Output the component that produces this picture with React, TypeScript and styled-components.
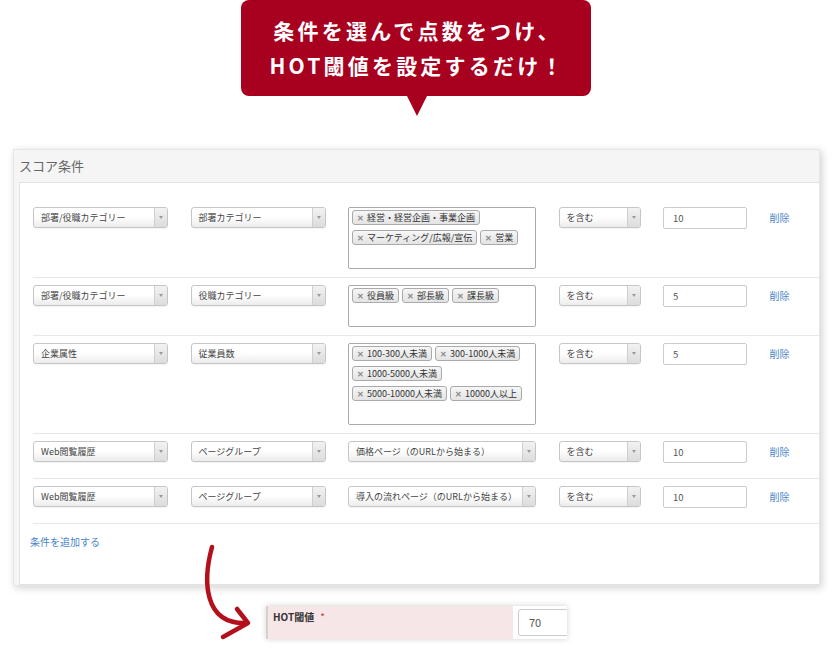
import React from 'react';
import styled, { createGlobalStyle } from 'styled-components';

const GlobalStyle = createGlobalStyle`
  body {
    margin: 0;
    background: #fff;
    font-family: "Noto Sans CJK JP", "Noto Sans", sans-serif;
  }
`;

const Page = styled.div`
  position: relative;
  width: 838px;
  height: 657px;
  overflow: hidden;
`;

const Callout = styled.div`
  position: relative;
  margin-left: 241px;
  width: 350px;
  box-sizing: border-box;
  padding: 13px 0 13px 3px;
  background: #a8001f;
  border-radius: 8px;
  color: #fff;
  text-align: center;
  font-size: 21px;
  font-weight: 700;
  line-height: 35px;
  letter-spacing: 3.2px;

  &::after {
    content: '';
    position: absolute;
    left: 166px;
    top: 96px;
    border-left: 10.5px solid transparent;
    border-right: 10.5px solid transparent;
    border-top: 20px solid #a8001f;
  }
`;

const Panel = styled.section`
  margin: 53px 0 0 13px;
  width: 807px;
  box-sizing: border-box;
  background: #f5f5f5;
  border: 1px solid #e6e6e6;
  box-shadow: 2px 2px 8px rgba(0, 0, 0, 0.18);
  padding-left: 5px;
`;

const PanelTitle = styled.h2`
  margin: 0;
  height: 32px;
  line-height: 32px;
  font-size: 13px;
  font-weight: 400;
  color: #666;
`;

const PanelBody = styled.div`
  background: #fff;
  border: 1px solid #e2e2e2;
  border-right: none;
  padding: 17px 0 35px 13px;
`;

const Row = styled.div`
  display: grid;
  grid-template-columns: 135px 135px 188px 82px 84px auto;
  grid-auto-rows: minmax(29px, auto);
  column-gap: 22.5px;
  align-items: start;
  padding: 7px 0 8px;
  border-bottom: 1px solid #e8e8e8;
`;

const Select = styled.div`
  display: flex;
  height: 21px;
  box-sizing: border-box;
  border: 1px solid #c6c6c6;
  border-radius: 3px;
  background: linear-gradient(#fff 45%, #ececec);
  box-shadow: 0 1px 1px rgba(0, 0, 0, 0.05);
  font-size: 9px;
  color: #444;
  overflow: hidden;
`;

const SelectText = styled.span`
  flex: 1;
  padding-left: 7px;
  line-height: 19px;
  white-space: nowrap;
`;

const SelectArrow = styled.span`
  width: 12px;
  display: flex;
  align-items: center;
  justify-content: center;
  border-left: 1px solid #cfcfcf;
  background: linear-gradient(#f2f2f2, #dcdcdc);

  &::before {
    content: '';
    border-left: 2.5px solid transparent;
    border-right: 2.5px solid transparent;
    border-top: 3px solid #9a9a9a;
  }
`;

const MultiBox = styled.div`
  display: flex;
  flex-wrap: wrap;
  align-content: flex-start;
  box-sizing: border-box;
  border: 1px solid #aaa;
  border-radius: 2px;
  padding: 0 3px 20px 0;
`;

const Tag = styled.span`
  display: inline-flex;
  align-items: center;
  height: 15px;
  box-sizing: border-box;
  margin: 2px 0 3px 3px;
  padding: 0 4px 0 4px;
  border: 1px solid #aaa;
  border-radius: 3px;
  background: linear-gradient(#f6f6f6, #e4e4e4);
  font-size: 9px;
  line-height: 13px;
  color: #333;
  white-space: nowrap;
`;

const TagRemove = styled.span`
  width: 10px;
  font-size: 8px;
  font-weight: 700;
  color: #8a8a8a;
`;

const InputBox = styled.div`
  height: 22px;
  box-sizing: border-box;
  border: 1px solid #ccc;
  border-radius: 2px;
  padding-left: 9px;
  line-height: 20px;
  font-size: 9.5px;
  color: #555;
`;

const DeleteLink = styled.a`
  font-size: 10px;
  line-height: 22px;
  color: #4a86c8;
  text-decoration: none;
`;

const AddLink = styled.a`
  display: block;
  margin: 11px 0 0 -3px;
  font-size: 10px;
  line-height: 14px;
  color: #4a86c8;
  text-decoration: none;
`;

const Arrow = styled.svg`
  position: absolute;
  left: 195px;
  top: 540px;
`;

const Threshold = styled.div`
  display: flex;
  margin: 20px 0 0 266px;
  width: 301px;
  height: 33px;
  overflow: hidden;
  box-shadow: 0 0 6px rgba(0, 0, 0, 0.18);
`;

const ThresholdLabel = styled.div`
  flex: 0 0 247px;
  box-sizing: border-box;
  background: #f6e6e7;
  border-left: 2px solid #d2d2d2;
  padding: 4px 0 0 5px;
  font-size: 10px;
  font-weight: 700;
  line-height: 14px;
  color: #333;
`;

const Required = styled.span`
  margin-left: 6px;
  color: #c0392b;
  font-weight: 400;
`;

const ThresholdField = styled.div`
  flex: 0 0 auto;
  background: #fff;
  padding: 3px 0 0 5px;
`;

const ThresholdInput = styled.div`
  width: 80px;
  height: 27px;
  box-sizing: border-box;
  border: 1px solid #ccc;
  border-radius: 3px;
  padding-left: 10px;
  line-height: 25px;
  font-size: 11px;
  color: #555;
`;

type Condition = {
  category: string;
  sub: string;
  tags?: string[];
  value?: string;
  op: string;
  score: string;
};

const conditions: Condition[] = [
  {
    category: '部署/役職カテゴリー',
    sub: '部署カテゴリー',
    tags: ['経営・経営企画・事業企画', 'マーケティング/広報/宣伝', '営業'],
    op: 'を含む',
    score: '10',
  },
  {
    category: '部署/役職カテゴリー',
    sub: '役職カテゴリー',
    tags: ['役員級', '部長級', '課長級'],
    op: 'を含む',
    score: '5',
  },
  {
    category: '企業属性',
    sub: '従業員数',
    tags: ['100-300人未満', '300-1000人未満', '1000-5000人未満', '5000-10000人未満', '10000人以上'],
    op: 'を含む',
    score: '5',
  },
  {
    category: 'Web閲覧履歴',
    sub: 'ページグループ',
    value: '価格ページ（のURLから始まる）',
    op: 'を含む',
    score: '10',
  },
  {
    category: 'Web閲覧履歴',
    sub: 'ページグループ',
    value: '導入の流れページ（のURLから始まる）',
    op: 'を含む',
    score: '10',
  },
];

const Dropdown: React.FC<{ label: string }> = ({ label }) => (
  <Select>
    <SelectText>{label}</SelectText>
    <SelectArrow />
  </Select>
);

export default function App() {
  return (
    <Page>
      <GlobalStyle />
      <Callout>
        条件を選んで点数をつけ、
        <br />
        HOT閾値を設定するだけ！
      </Callout>

      <Panel>
        <PanelTitle>スコア条件</PanelTitle>
        <PanelBody>
          {conditions.map((c, i) => (
            <Row key={i}>
              <Dropdown label={c.category} />
              <Dropdown label={c.sub} />
              {c.tags ? (
                <MultiBox>
                  {c.tags.map((t) => (
                    <Tag key={t}>
                      <TagRemove>✕</TagRemove>
                      {t}
                    </Tag>
                  ))}
                </MultiBox>
              ) : (
                <Dropdown label={c.value ?? ''} />
              )}
              <Dropdown label={c.op} />
              <InputBox>{c.score}</InputBox>
              <DeleteLink href="#">削除</DeleteLink>
            </Row>
          ))}
          <AddLink href="#">条件を追加する</AddLink>
        </PanelBody>
      </Panel>

      <Threshold>
        <ThresholdLabel>
          HOT閾値<Required>*</Required>
        </ThresholdLabel>
        <ThresholdField>
          <ThresholdInput>70</ThresholdInput>
        </ThresholdField>
      </Threshold>

      <Arrow width="65" height="105" viewBox="195 540 65 105">
        <g fill="none" stroke="#b3101c" strokeWidth="4.5" strokeLinecap="round" strokeLinejoin="round">
          <path d="M212 547 C203 580, 203 625, 247 623" />
          <path d="M237 609 L248 623 L223 637" />
        </g>
      </Arrow>
    </Page>
  );
}
